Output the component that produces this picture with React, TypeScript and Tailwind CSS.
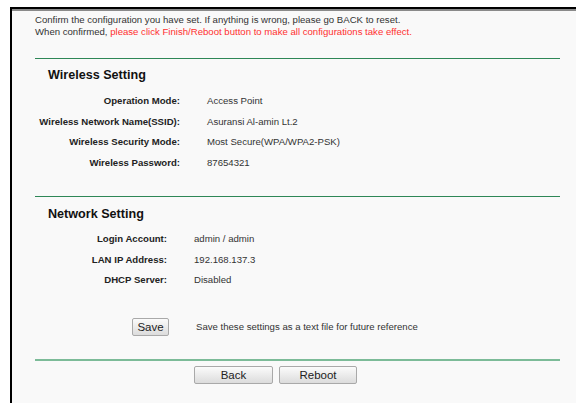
import React from "react";

const font = { fontFamily: '"Liberation Sans", Arial, sans-serif' };

function Row({ label, value, labelW }: { label: string; value: string; labelW: string }) {
  return (
    <div className="flex h-[20.7px] items-center">
      <div className={`${labelW} text-right font-bold text-[#222]`}>{label}</div>
      <div className="ml-[27px] text-[#333]">{value}</div>
    </div>
  );
}

function Btn({ children, w }: { children: React.ReactNode; w: string }) {
  return (
    <button
      className={`${w} h-[18px] rounded-[2px] border border-[#a9a9a9] bg-gradient-to-b from-[#fbfbfb] to-[#dcdcdc] text-[11.5px] leading-[16px] text-[#222]`}
    >
      {children}
    </button>
  );
}

export default function App() {
  return (
    <div className="h-[403px] w-[576px] overflow-hidden bg-white pl-[10px] pt-[7px]" style={font}>
      <div className="h-[396px] border-l-2 border-t-2 border-black">
        <div className="h-full border-t-2 border-[#8a8a8a] bg-[#f9f9f9] text-[9.6px] leading-[12px]">
          <div className="pl-[23px] pt-[3px] text-[#333]">
            <p>Confirm the configuration you have set. If anything is wrong, please go BACK to reset.</p>
            <p>
              When confirmed, <span className="text-[#ff3030]">please click Finish/Reboot button to make all configurations take effect.</span>
            </p>
          </div>

          <div className="ml-[23px] mt-[20px] h-px w-[525px] bg-[#2e8757]" />

          <div className="pl-[36px] pt-[8px] text-[12.6px] font-bold leading-[16px] text-[#111]">Wireless Setting</div>
          <div className="mt-[7.6px]">
            <Row labelW="w-[168px]" label="Operation Mode:" value="Access Point" />
            <Row labelW="w-[168px]" label="Wireless Network Name(SSID):" value="Asuransi Al-amin Lt.2" />
            <Row labelW="w-[168px]" label="Wireless Security Mode:" value="Most Secure(WPA/WPA2-PSK)" />
            <Row labelW="w-[168px]" label="Wireless Password:" value="87654321" />
          </div>

          <div className="ml-[23px] mt-[22.6px] h-px w-[525px] bg-[#2e8757]" />

          <div className="pl-[36px] pt-[9px] text-[12.6px] font-bold leading-[16px] text-[#111]">Network Setting</div>
          <div className="mt-[6.6px]">
            <Row labelW="w-[155px]" label="Login Account:" value="admin / admin" />
            <Row labelW="w-[155px]" label="LAN IP Address:" value="192.168.137.3" />
            <Row labelW="w-[155px]" label="DHCP Server:" value="Disabled" />
          </div>

          <div className="mt-[27px] flex h-[18px] items-center">
            <div className="ml-[120px] flex">
              <Btn w="w-[37px]">Save</Btn>
            </div>
            <div className="ml-[27px] text-[#333]">Save these settings as a text file for future reference</div>
          </div>

          <div className="ml-[23px] mt-[23.5px] h-[2px] w-[525px] bg-[#7cbb98]" />

          <div className="ml-[182px] mt-[5px] flex gap-[6px]">
            <Btn w="w-[79px]">Back</Btn>
            <Btn w="w-[78px]">Reboot</Btn>
          </div>
        </div>
      </div>
    </div>
  );
}
